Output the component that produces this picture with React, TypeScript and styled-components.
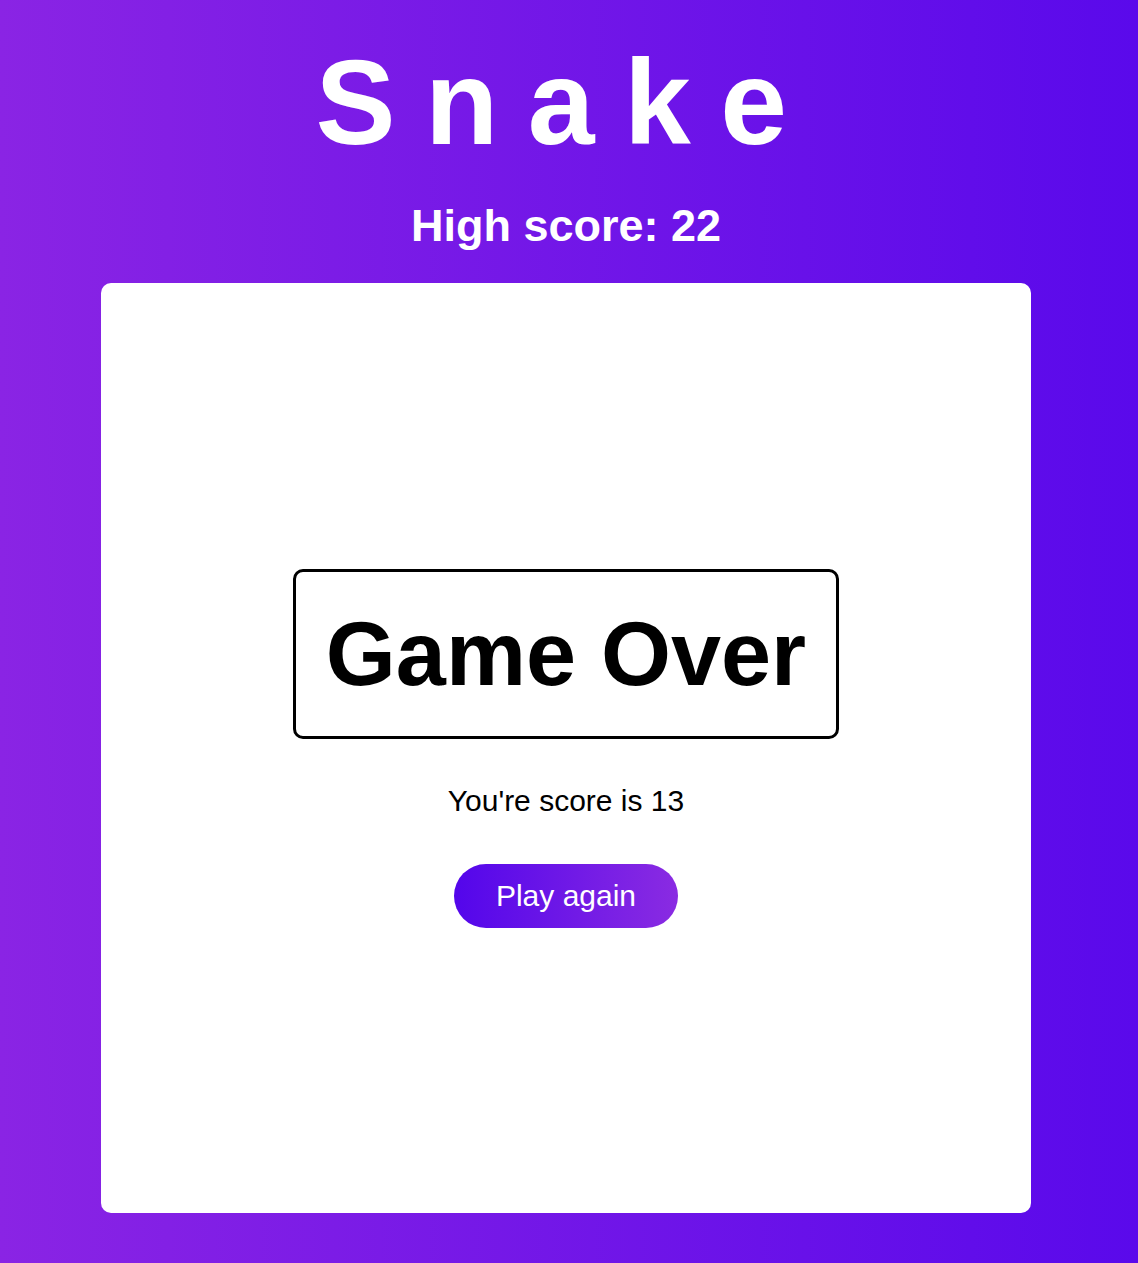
import React from "react";
import styled, { createGlobalStyle } from "styled-components";

const GlobalStyle = createGlobalStyle`
  html, body {
    margin: 0;
    padding: 0;
    min-height: 100%;
  }
  body {
    font-family: "Liberation Sans", Arial, sans-serif;
    background: linear-gradient(to right, #8a24e4, #5a09eb);
    min-height: 100vh;
  }
`;

const Page = styled.main`
  min-height: 100vh;
  box-sizing: border-box;
  padding: 32px 6px 50px 0;
  display: flex;
  flex-direction: column;
  align-items: center;
`;

const Title = styled.h1`
  margin: 0;
  font-size: 120px;
  font-weight: 700;
  color: #ffffff;
  letter-spacing: 29.5px;
  line-height: 140px;
`;

const HighScore = styled.h2`
  margin: 28px 0 31px;
  font-size: 45px;
  font-weight: 700;
  color: #ffffff;
  line-height: 52px;
`;

const Board = styled.section`
  width: 930px;
  height: 930px;
  background: #ffffff;
  border-radius: 10px;
  display: flex;
  flex-direction: column;
  align-items: center;
  justify-content: center;
`;

const GameOverBox = styled.div`
  border: 3px solid #000000;
  border-radius: 10px;
  padding: 29px 30px;
  font-size: 90px;
  font-weight: 700;
  color: #000000;
  line-height: 106px;
  white-space: nowrap;
`;

const ScoreText = styled.p`
  margin: 46px 0 0;
  font-size: 30px;
  line-height: 32px;
  color: #000000;
`;

const PlayButton = styled.button`
  margin-top: 47px;
  height: 64px;
  padding: 0 42px;
  border: none;
  border-radius: 32px;
  background: linear-gradient(to right, #5306eb, #8a2be2);
  color: #ffffff;
  font-family: "Liberation Sans", Arial, sans-serif;
  font-size: 30px;
  cursor: pointer;
`;

export default function App() {
  return (
    <>
      <GlobalStyle />
      <Page>
        <Title>Snake</Title>
        <HighScore>High score: 22</HighScore>
        <Board>
          <GameOverBox>Game Over</GameOverBox>
          <ScoreText>You're score is 13</ScoreText>
          <PlayButton>Play again</PlayButton>
        </Board>
      </Page>
    </>
  );
}
